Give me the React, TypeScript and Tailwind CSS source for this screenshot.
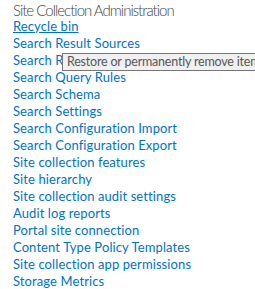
const links = [
  "Recycle bin",
  "Search Result Sources",
  "Search Result Types",
  "Search Query Rules",
  "Search Schema",
  "Search Settings",
  "Search Configuration Import",
  "Search Configuration Export",
  "Site collection features",
  "Site hierarchy",
  "Site collection audit settings",
  "Audit log reports",
  "Portal site connection",
  "Content Type Policy Templates",
  "Site collection app permissions",
  "Storage Metrics",
];

export default function App() {
  return (
    <div
      className="relative h-[289px] w-[255px] overflow-hidden bg-white pl-[13px]"
      style={{ fontFamily: 'Lato, "Open Sans", sans-serif' }}
    >
      <h3 className="h-[18px] pt-[1px] text-[15px] leading-[18px] tracking-[-1px] font-light text-[#444444]">
        Site Collection Administration
      </h3>
      <ul>
        {links.map((l, i) => (
          <li key={l} className="h-[17px] text-[13px] leading-[17px] tracking-[0.1px] text-[#0072c6]">
            <a href="#" className={i === 0 ? "underline" : ""}>
              {l}
            </a>
          </li>
        ))}
      </ul>
      {/* tooltip for Recycle bin */}
      <div className="absolute top-[53px] left-[62px] h-[18px] border border-[#767676] bg-[#f0f0f0] pl-[4px] pr-2 text-[12.5px] leading-[16px] tracking-[-0.2px] whitespace-nowrap text-[#575757]">
        Restore or permanently remove items
      </div>
    </div>
  );
}
